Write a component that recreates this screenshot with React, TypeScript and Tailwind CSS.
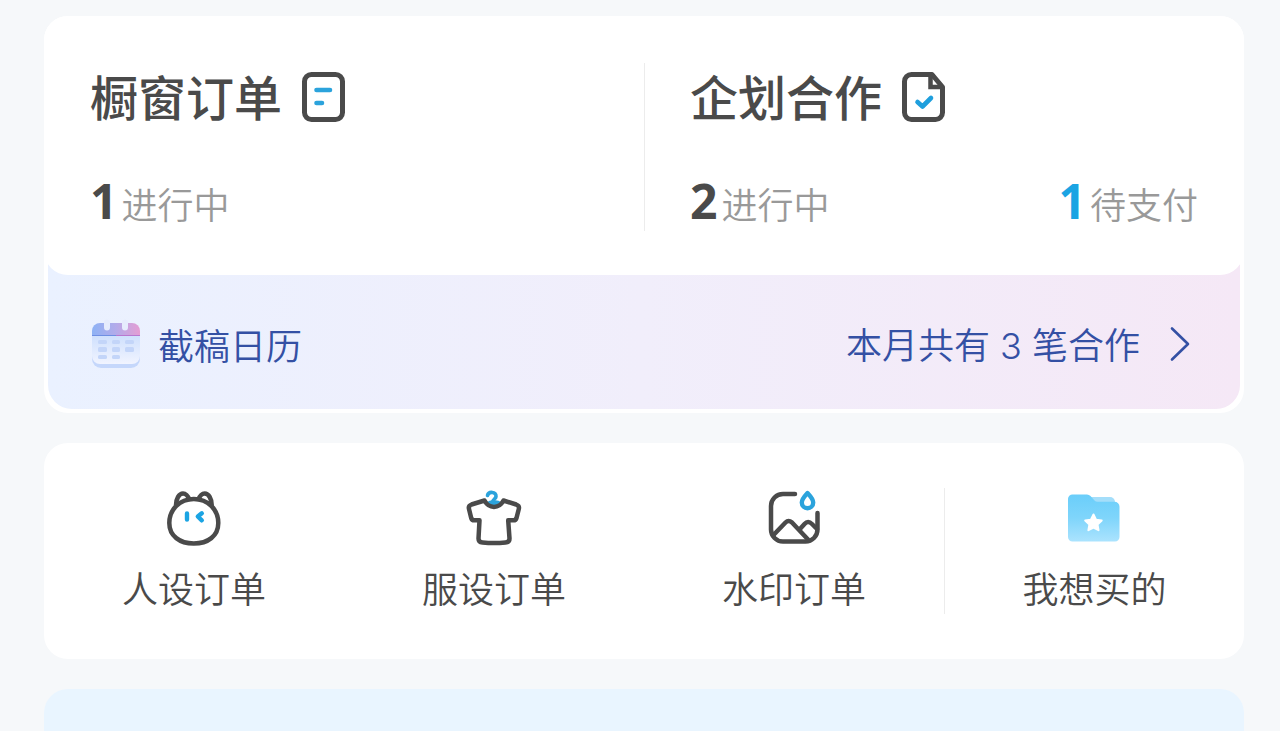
import React from 'react';

const DocIcon = () => (
  <svg viewBox="0 0 44 52" fill="none" className="h-[52px] w-11" aria-hidden="true">
    <rect x="2.500" y="3.500" width="38" height="45" rx="7" stroke="#4a4a4a" strokeWidth="5" />
    <path d="M14.500 19H28M14.500 32h5.500" stroke="#2ba3dc" strokeWidth="4.600" strokeLinecap="round" />
  </svg>
);

const CheckDocIcon = () => (
  <svg viewBox="0 0 44 52" fill="none" className="h-[52px] w-11" aria-hidden="true">
    <path d="M9.500 3.500h20.500l10.500 12.500v25.500a7 7 0 0 1-7 7h-24a7 7 0 0 1-7-7v-31a7 7 0 0 1 7-7z" stroke="#4a4a4a" strokeWidth="5" strokeLinejoin="round" />
    <path d="M28.500 3.500V16H40.500" stroke="#4a4a4a" strokeWidth="4.500" />
    <path d="M15.500 31l5 4.500 8.500-8.500" stroke="#1f9fdd" strokeWidth="4.600" strokeLinecap="round" strokeLinejoin="round" />
  </svg>
);

const CalendarIcon = () => (
  <svg viewBox="0 0 48 50" fill="none" className="h-[50px] w-12" aria-hidden="true">
    <defs>
      <linearGradient id="calTop" x1="0" y1="0" x2="1" y2="0">
        <stop offset="0" stopColor="#8db2f5" />
        <stop offset="0.5" stopColor="#b3abea" />
        <stop offset="1" stopColor="#e59dd3" />
      </linearGradient>
      <linearGradient id="calBody" x1="0" y1="0" x2="0" y2="1">
        <stop offset="0" stopColor="#cfe0fd" />
        <stop offset="1" stopColor="#f1f4ff" />
      </linearGradient>
    </defs>
    <rect y="8" width="48" height="41" rx="9" fill="#c5d7fb" />
    <path d="M0 17h48v20a8 8 0 0 1-8 8H8a8 8 0 0 1-8-8z" fill="url(#calBody)" />
    <path d="M0 17v-5a8 8 0 0 1 8-8h32a8 8 0 0 1 8 8v5z" fill="url(#calTop)" />
    <path d="M0 16.500h24" stroke="#6f8fe3" />
    <path d="M24 16.500h24" stroke="#b978d0" />
    <path d="M15 3.500v5M33 3.500v5" stroke="#e6ecfd" strokeWidth="6" strokeLinecap="round" />
    <g fill="#c3d5f9">
      <rect x="6" y="21" width="9" height="4" rx="1.500" />
      <rect x="20" y="21" width="8" height="4" rx="1.500" />
      <rect x="33" y="21" width="9" height="4" rx="1.500" />
      <rect x="6" y="28" width="9" height="5" rx="1.500" />
      <rect x="20" y="28" width="8" height="5" rx="1.500" />
      <rect x="33" y="28" width="9" height="5" rx="1.500" />
      <rect x="6" y="36" width="9" height="4" rx="1.500" />
      <rect x="20" y="36" width="8" height="4" rx="1.500" />
    </g>
  </svg>
);

const CatIcon = () => (
  <svg viewBox="0 0 60 60" fill="none" className="size-[60px]" aria-hidden="true">
    <g stroke="#4a4a4a" strokeWidth="4.500" strokeLinecap="round" strokeLinejoin="round">
      <path d="M29.800 11c14 0 24.500 10.500 24.500 24 0 13-10.500 20.500-24.500 20.500S5.300 48 5.300 35c0-13.500 10.500-24 24.500-24z" />
      <path d="M12 17c0-6 3-11.500 7-11.500 2.500 0 5 2.500 6 5.500M47.700 17c0-6-3-11.500-7-11.500-2.500 0-5 2.500-6 5.500" />
    </g>
    <path d="M23 25.500v6M37.800 25.300l-4 3.200 4 3.800" stroke="#1ba4e3" strokeWidth="4.400" strokeLinecap="round" strokeLinejoin="round" />
  </svg>
);

const ShirtIcon = () => (
  <svg viewBox="0 0 60 60" fill="none" className="size-[60px]" aria-hidden="true">
    <path d="M23.500 7.500c1-4.500 9-4 8.500 1-.2 2.500-3 2.500-3.500 5.500" stroke="#2ba3dc" strokeWidth="3.600" strokeLinecap="round" />
    <path d="M21 15q9-6 18 0l-5 4h-8z" fill="#2ba3dc" />
    <path d="M20.500 12.500L7.500 16.500c-2 .7-3 2.500-2.500 4.500l2.200 9c.5 1.600 1.500 2.300 3 2.300h5.300L14.500 50.500c0 2.500 1.500 3.800 4 4 8 .8 15 .8 23 0 2.500-.2 4-1.500 4-4l-1.300-18.200h5.300c1.500 0 2.500-.7 3-2.300l2.300-9c.5-2-.6-3.800-2.600-4.500l-12.700-4c-4.500 8.500-14.500 8.500-19 0z" stroke="#4a4a4a" strokeWidth="4.500" strokeLinejoin="round" />
  </svg>
);

const WatermarkIcon = () => (
  <svg viewBox="0 0 60 60" fill="none" className="size-[60px]" aria-hidden="true">
    <g stroke="#4a4a4a" strokeWidth="4.500" strokeLinecap="round" strokeLinejoin="round">
      <path d="M31 6H19a12 12 0 0 0-12 12V41.500a12 12 0 0 0 12 12h22.500a12 12 0 0 0 12-12V25" />
      <path d="M9 47.500l12.500-13q3-3 6.500 0L44 51.500M35.500 41.500l5-5.500q3.500-4 7.500 0l5 5" />
    </g>
    <path d="M43.500 5c3 3.200 5.700 6 5.700 9.500a5.700 5.700 0 0 1-11.400 0c0-3.500 2.700-6.300 5.700-9.500z" stroke="#2ba3dc" strokeWidth="4.400" strokeLinejoin="round" />
  </svg>
);

const FolderIcon = () => (
  <svg viewBox="0 0 60 60" fill="none" className="size-[60px]" aria-hidden="true">
    <defs>
      <linearGradient id="folder" x1="0" y1="0" x2="0" y2="1">
        <stop offset="0" stopColor="#6acefa" />
        <stop offset="0.500" stopColor="#7fd5fb" />
        <stop offset="1" stopColor="#abe3fe" />
      </linearGradient>
    </defs>
    <path d="M22 9h23a5 5 0 0 1 5 5v8H22z" fill="#a4defa" />
    <path d="M7.500 6.500H22q2 0 3.500 1.500l4 4.500q1.200 1.300 3 1.300h17a5 5 0 0 1 5 5V49a4.500 4.500 0 0 1-4.500 4.500H7.500A4.500 4.500 0 0 1 3 49V11a4.500 4.500 0 0 1 4.500-4.500z" fill="url(#folder)" />
    <path d="M28.500 26.500l2.500 5.200 5.700.8-4.200 4 1 5.700-5-2.700-5.100 2.700 1-5.700-4.200-4 5.700-.8z" fill="#fff" stroke="#fff" strokeWidth="2" strokeLinejoin="round" />
  </svg>
);

const shortcuts = [
  { label: '人设订单', icon: <CatIcon /> },
  { label: '服设订单', icon: <ShirtIcon /> },
  { label: '水印订单', icon: <WatermarkIcon /> },
  { label: '我想买的', icon: <FolderIcon /> },
];

interface CountProps {
  value: number;
  label: string;
  highlight?: boolean;
}

const Count: React.FC<CountProps> = ({ value, label, highlight }) => (
  <p className="flex items-baseline gap-1 leading-[56px]">
    <span className={`font-['Noto_Sans',sans-serif] text-[48px] font-bold ${highlight ? 'text-[#1ba4e3]' : 'text-[#4a4a4a]'}`}>{value}</span>
    <span className="text-4xl/[56px] font-[350] text-[#999]">{label}</span>
  </p>
);

export default function App() {
  return (
    <main className="flex min-h-screen flex-col gap-[30px] bg-[#f6f8fa] pt-4 pr-9 pl-11 font-['Noto_Sans_CJK_SC',sans-serif] text-[#4a4a4a]">
      <section className="rounded-3xl bg-white">
        <div className="rounded-[28px] border-4 border-t-0 border-white bg-gradient-to-r from-[#eaf1ff] via-[#f1eefb] to-[#f5e8f6]">
          <div className="-mx-1 grid grid-cols-2 rounded-3xl bg-white pt-[47px] pb-11">
            <a href="#orders" className="flex h-[168px] flex-col justify-between pt-1.5 pl-[46px]">
              <h2 className="flex items-center gap-5 text-[48px]/[52px] font-medium">
                <span className="pb-1">橱窗订单</span>
                <DocIcon />
              </h2>
              <Count value={1} label="进行中" />
            </a>
            <a href="#projects" className="flex h-[168px] flex-col justify-between border-l border-[#ececec] pt-1.5 pr-[46px] pl-[45px]">
              <h2 className="flex items-center gap-5 text-[48px]/[52px] font-medium">
                <span className="pb-1">企划合作</span>
                <CheckDocIcon />
              </h2>
              <div className="flex justify-between">
                <Count value={2} label="进行中" />
                <Count value={1} label="待支付" highlight />
              </div>
            </a>
          </div>
          <a href="#calendar" className="flex h-[134px] items-center pt-1 pr-[50px] pl-11 text-4xl/[48px] font-[350] text-[#3450a4]">
            <CalendarIcon />
            <span className="ml-[18px] flex-1">截稿日历</span>
            <span>
              本月共有<span className="font-[Inter,sans-serif]"> 3 </span>笔合作
            </span>
            <svg viewBox="0 0 20 36" fill="none" className="ml-[30px] h-9 w-5" aria-hidden="true">
              <path d="M2 2.500l16 15.500L2 33.500" stroke="currentColor" strokeWidth="2.600" strokeLinecap="round" strokeLinejoin="round" />
            </svg>
          </a>
        </div>
      </section>

      <nav className="grid h-[216px] grid-cols-4 items-center rounded-3xl bg-white">
        {shortcuts.map((item, i) => (
          <a
            key={item.label}
            href={`#shortcut-${i}`}
            className="flex h-[126px] flex-col items-center gap-3 border-[#ececec] text-4xl/[54px] font-[350] last:border-l"
          >
            {item.icon}
            {item.label}
          </a>
        ))}
      </nav>

      <section className="flex-1 rounded-t-3xl bg-[#e9f5ff]" />
    </main>
  );
}
